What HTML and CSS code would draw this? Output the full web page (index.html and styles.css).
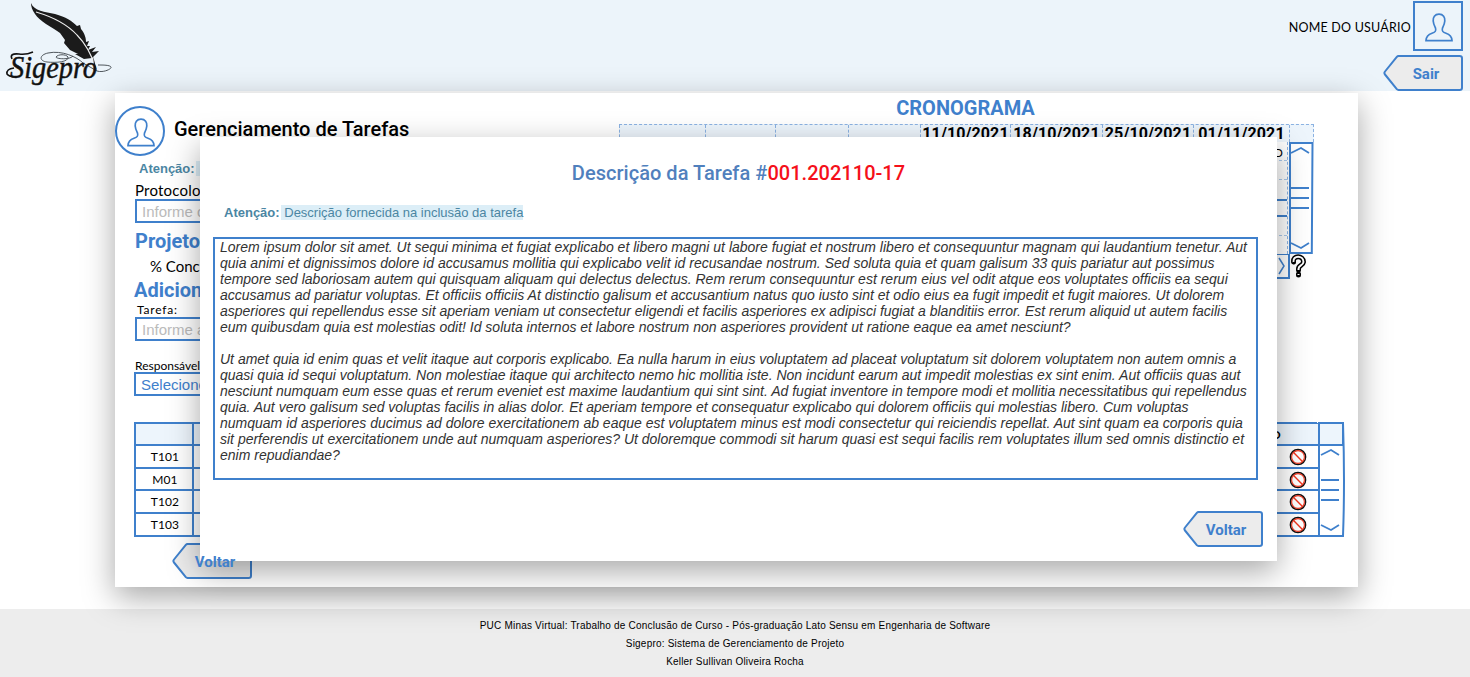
FILE: index.html
```
<!DOCTYPE html>
<html lang="pt-BR">
<head>
<meta charset="utf-8">
<title>Sigepro</title>
<link rel="stylesheet" href="styles.css">
</head>
<body>
<svg width="0" height="0" class="defs">
  <symbol id="person" viewBox="0 0 28 30"><path d="M14 1.200C9.700 1.200 7.900 4.500 8.200 8C8.400 11 9.500 13 10.500 15C11.300 18 10.500 19.200 7 20.300C3 21.500 1.200 23.500 1 27.600H27C26.800 23.500 25 21.500 21 20.300C17.500 19.200 16.700 18 17.500 15C18.500 13 19.600 11 19.800 8C20.100 4.500 18.300 1.200 14 1.200Z" fill="none" stroke="#3f80cc" stroke-width="1.700"/></symbol>
  <symbol id="tag" viewBox="0 0 80 36"><path d="M15.500 1H76.500Q79 1 79 3V33Q79 35 76.500 35H15.500Q14.500 35 13.800 34.200L2 19.500Q.8 18 2 16.500L13.800 1.800Q14.500 1 15.500 1Z" fill="#ececec" stroke="#3f80cc" stroke-width="2"/></symbol>
  <symbol id="no" viewBox="0 0 18 18"><circle cx="9" cy="9" r="7.600" fill="#fff" stroke="#111" stroke-width="1.500"/><circle cx="9" cy="9" r="6.400" fill="#fff" stroke="#f0341c" stroke-width="1.100"/><path d="M4.600 4.600L13.400 13.400" stroke="#f0341c" stroke-width="1.400"/></symbol>
</svg>

<header class="top">
  <svg class="logo" viewBox="0 0 115 91">
    <path d="M31 3C34 11 45 12 55 14C66 17 72 21 77 26L80 25L81 29C85 34 86 38 86 42L89 41L87 46L90 46L88 50L96 47L92 52L99 51L92 58L84 59L75 54L78 54L70 50L64 43L65 40L60 33C52 27 39 21 35 14C32 10 31 6 31 3Z" fill="#1b1b1b"/>
    <path d="M36 12C53 17 66 23 77 35C85 43 91 52 96 69" fill="none" stroke="#eee" stroke-width="1.100"/>
    <path d="M93 56L97 71L94 65Z" fill="#222"/>
    <path d="M73 56C70 60 56 59 56 57C58 54 66 54 68 57C69 62 56 63 47 62C39 61 39 55 48 53C62 50 77 57 83 63L97 71C103 73 112 69 111 67C110 65 103 65 98 65" fill="none" stroke="#3d444a" stroke-width=".9"/>
    <text x="10" y="78" textLength="87" lengthAdjust="spacingAndGlyphs" class="logo-text">Sigepro</text>
    <path d="M12 59Q9 53 19 54Q26 55 33 52M14 68Q6 69 7 74Q10 78 20 76" fill="none" stroke="#111" stroke-width="1.600"/>
  </svg>
  <div class="account">
    <div class="user"><span class="hand user-name">NOME DO USUÁRIO</span><div class="avatar"><svg width="28" height="30"><use href="#person"/></svg></div></div>
    <button class="tag"><svg width="80" height="36"><use href="#tag"/></svg><span>Sair</span></button>
  </div>
</header>

<main class="panel">
  <div class="upper">
    <section class="form">
      <div class="title"><div class="avatar round"><svg width="28" height="30"><use href="#person"/></svg></div><h1>Gerenciamento de Tarefas</h1></div>
      <p class="notice"><b>Atenção:</b><mark>&nbsp;&nbsp;&nbsp;</mark></p>
      <label class="hand protocol">Protocolo</label>
      <div class="field">Informe o</div>
      <h2 class="project">Projeto</h2>
      <div class="hand done">% Conc</div>
      <h2 class="add">Adicion</h2>
      <label class="hand task">Tarefa:</label>
      <div class="field">Informe a</div>
      <label class="hand owner">Responsável</label>
      <div class="field select">Selecione</div>
    </section>
    <section class="schedule">
      <h2>CRONOGRAMA</h2>
      <div class="chart">
        <div class="dates"><i></i><i></i><i></i><i></i><b>11/10/2021</b><b>18/10/2021</b><b>25/10/2021</b><b>01/11/2021</b><i></i></div>
        <div class="chart-body">
          <div class="rows"><div class="hand">D</div><div></div><div class="line"></div><div class="line second"></div><div></div></div>
          <svg class="scroll" width="26" height="112" viewBox="0 0 26 112"><path d="M2 1H24.500L23.800 111H2Z"/><path d="M3 11L13 6L21 11M3 46H21M3 56H21M3 66H21M3 101L13 106L21 101" class="thin"/></svg>
        </div>
        <div class="chart-foot"><div class="hscroll"><svg width="10" height="20" viewBox="0 0 10 20"><path d="M2 2L7 10L2 18"/></svg></div><svg class="help" width="18" height="24" viewBox="0 0 18 24"><path d="M3.500 8C2.500 1 13.500 1 13.500 8C13 12 8.500 11 8.500 15V16M8.500 20V21" stroke="#000" stroke-width="5" stroke-linecap="round"/><path d="M3.500 8C2.500 1 13.500 1 13.500 8C13 12 8.500 11 8.500 15V16M8.500 20V21" stroke="#fff" stroke-width="2"/></svg></div>
      </div>
    </section>
  </div>
  <div class="tasks">
    <div class="task-grid hand">
      <div class="head"></div><div class="head"></div><div class="head right">O</div>
      <div>T101</div><div></div><div class="right"><svg width="18" height="18"><use href="#no"/></svg></div>
      <div>M01</div><div></div><div class="right"><svg width="18" height="18"><use href="#no"/></svg></div>
      <div>T102</div><div></div><div class="right"><svg width="18" height="18"><use href="#no"/></svg></div>
      <div>T103</div><div></div><div class="right"><svg width="18" height="18"><use href="#no"/></svg></div>
    </div>
    <svg class="scroll" width="28" height="115" viewBox="0 0 28 115"><path d="M2 1H26V23H2Z" class="cap"/><path d="M2 1H26Q28 60 26 114H2Z"/><path d="M4 33L14 28L22 33M4 58H22M4 68H22M4 78H22M4 103L14 108L22 103" class="thin"/></svg>
  </div>
  <button class="tag back"><svg width="80" height="36"><use href="#tag"/></svg><span>Voltar</span></button>
</main>

<footer><p>PUC Minas Virtual: Trabalho de Conclusão de Curso - Pós-graduação Lato Sensu em Engenharia de Software</p><p>Sigepro: Sistema de Gerenciamento de Projeto</p><p>Keller Sullivan Oliveira Rocha</p></footer>

<div class="modal">
  <h1>Descrição da Tarefa #<span>001.202110-17</span></h1>
  <p class="notice"><b>Atenção:</b><mark>&nbsp;Descrição fornecida na inclusão da tarefa</mark></p>
  <div class="description">
    <p>Lorem ipsum dolor sit amet. Ut sequi minima et fugiat explicabo et libero magni ut labore fugiat et nostrum libero et consequuntur magnam qui laudantium tenetur. Aut<br>quia animi et dignissimos dolore id accusamus mollitia qui explicabo velit id recusandae nostrum. Sed soluta quia et quam galisum 33 quis pariatur aut possimus<br>tempore sed laboriosam autem qui quisquam aliquam qui delectus delectus. Rem rerum consequuntur est rerum eius vel odit atque eos voluptates officiis ea sequi<br>accusamus ad pariatur voluptas. Et officiis officiis At distinctio galisum et accusantium natus quo iusto sint et odio eius ea fugit impedit et fugit maiores. Ut dolorem<br>asperiores qui repellendus esse sit aperiam veniam ut consectetur eligendi et facilis asperiores ex adipisci fugiat a blanditiis error. Est rerum aliquid ut autem facilis<br>eum quibusdam quia est molestias odit! Id soluta internos et labore nostrum non asperiores provident ut ratione eaque ea amet nesciunt?</p>
    <p>Ut amet quia id enim quas et velit itaque aut corporis explicabo. Ea nulla harum in eius voluptatem ad placeat voluptatum sit dolorem voluptatem non autem omnis a<br>quasi quia id sequi voluptatum. Non molestiae itaque qui architecto nemo hic mollitia iste. Non incidunt earum aut impedit molestias ex sint enim. Aut officiis quas aut<br>nesciunt numquam eum esse quas et rerum eveniet est maxime laudantium qui sint sint. Ad fugiat inventore in tempore modi et mollitia necessitatibus qui repellendus<br>quia. Aut vero galisum sed voluptas facilis in alias dolor. Et aperiam tempore et consequatur explicabo qui dolorem officiis qui molestias libero. Cum voluptas<br>numquam id asperiores ducimus ad dolore exercitationem ab eaque est voluptatem minus est modi consectetur qui reiciendis repellat. Aut sint quam ea corporis quia<br>sit perferendis ut exercitationem unde aut numquam asperiores? Ut doloremque commodi sit harum quasi est sequi facilis rem voluptates illum sed omnis distinctio et<br>enim repudiandae?</p>
  </div>
  <button class="tag modal-back"><svg width="80" height="36"><use href="#tag"/></svg><span>Voltar</span></button>
</div>
</body>
</html>
```
FILE: styles.css
```
* { box-sizing: border-box; }
body { margin: 0; width: 1470px; height: 677px; overflow: hidden; background: #fff; font-family: "Liberation Sans", sans-serif; color: #000; position: relative; }
h1, h2, p { margin: 0; }
.defs { position: absolute; }
svg { display: block; }
.hand { font-family: Lato, sans-serif; white-space: nowrap; }

.top { height: 91px; background: #ecf4fa; display: flex; justify-content: space-between; padding-right: 7px; }
.logo { width: 115px; height: 91px; }
.logo-text { font: italic 400 32px "Liberation Serif", serif; fill: #111; stroke: #111; stroke-width: .5; }
.account { display: flex; flex-direction: column; align-items: flex-end; gap: 4px; padding-top: 1px; }
.user { display: flex; align-items: center; gap: 2px; }
.user-name { font-size: 12.500px; letter-spacing: .22px; padding-top: 3px; }
.avatar { width: 50px; height: 50px; border: 2px solid #3f80cc; display: flex; align-items: center; justify-content: center; }
.avatar svg { margin: 3px 0 0 2px; }
.avatar.round { border-radius: 50%; }
.tag { display: grid; width: 80px; height: 36px; padding: 0; border: 0; background: none; color: #3f80cc; font: 700 15px Roboto, sans-serif; place-items: center; }
.tag > * { grid-area: 1 / 1; }
.tag span { padding-left: 6px; padding-top: 1px; z-index: 1; }

.panel { position: relative; width: 1243px; height: 494px; margin: 2px 0 0 115px; background: #fff; box-shadow: 0 10px 30px rgba(0,0,0,.35); }
.upper { display: flex; height: 329px; }
.form { width: 504px; display: flex; flex-direction: column; padding: 13px 0 0; }
.title { display: flex; gap: 9px; height: 50px; }
.title h1 { font: 500 20px/46px Roboto, sans-serif; }
.notice { font-size: 13px; line-height: 15px; color: #4b86a3; white-space: nowrap; }
.notice mark { margin-left: 1px; background: #dceef7; color: inherit; }
.form .notice { margin: 5px 0 0 24px; }
.protocol { font-size: 15px; line-height: 18px; margin: 5px 0 0 20px; height: 18px; letter-spacing: .2px; }
.field { width: 300px; height: 24px; margin-left: 20px; border: 2px solid #3f80cc; padding-left: 5px; font-size: 15px; line-height: 21px; color: #bbb; }
.form h2, .schedule h2 { font: 700 20px/24px Roboto, sans-serif; color: #3f80cc; }
.project { margin: 6px 0 0 20px; }
.done { font-size: 15px; line-height: 19px; height: 20px; margin: 4px 0 0 35px; }
.form .add { margin: 1px 0 0 19px; }
.task { font-size: 12px; line-height: 14px; margin: 1px 0 0 22px; height: 14px; letter-spacing: .8px; }
.owner { font-size: 12px; line-height: 14px; margin: 18px 0 0 20px; height: 13px; }
.field.select { color: #3f80cc; margin-left: 19px; }

.schedule { width: 700px; padding-top: 3px; }
.schedule h2 { text-align: center; height: 28px; width: 693px; }
.chart { width: 695px; }
.dates { display: grid; grid-template-columns: 86px 70px 73px 72px 90px 92px 91px 96px 25px; height: 18px; background: #edf5fc; border-top: 1px dashed #8bb2e2; border-right: 1px dashed #8bb2e2; }
.dates > * { border-left: 1px dashed #8bb2e2; overflow: visible; text-align: center; white-space: nowrap; font: 700 16px/17px Roboto, sans-serif; letter-spacing: .1px; }
.chart-body { display: flex; height: 112px; }
.rows { width: 670px; border-right: 1px dashed #8bb2e2; }
.rows div { height: 19px; border-bottom: 1px dashed #aac9ec; text-align: right; padding-right: 4px; font-size: 12px; line-height: 21px; }
.rows .line { height: 21px; border-bottom: 2px solid #3f80cc; }
.rows .second { height: 16px; }
.scroll { flex: none; fill: none; stroke: #3f80cc; stroke-width: 2; }
.scroll .thin { stroke-width: 1.800; }
.scroll .cap { fill: #edf5fc; }
.chart-foot { display: flex; }
.hscroll { width: 671px; height: 25px; border: 2px solid #3f80cc; border-top-width: 1px; padding-right: 1px; display: flex; justify-content: flex-end; align-items: center; fill: none; stroke: #3f80cc; stroke-width: 1.500; }
.help { fill: none; }

.tasks { display: flex; margin-left: 19px; height: 115px; }
.task-grid { width: 1183px; height: 115px; display: grid; grid-template-columns: 58px 1039px 84px; grid-template-rows: 23px 23px 22px 23px 23px; border-left: 2px solid #3f80cc; border-top: 1px solid #3f80cc; font-size: 12px; letter-spacing: .1px; }
.task-grid > div { border-right: 2px solid #3f80cc; border-bottom: 2px solid #3f80cc; display: flex; justify-content: center; align-items: center; padding-left: 2px; }
.task-grid > .head { background: #edf5fc; border-top: 1px solid #3f80cc; font-weight: 700; }
.task-grid > .right { width: 86px; padding-left: 44px; padding-top: 1px; border-right: 0; }
.task-grid > .head.right { padding: 0; justify-content: flex-start; padding-left: 38px; }
.back { margin: 6px 0 0 57px; }

footer { margin-top: 22px; height: 68px; background: #ededed; padding-top: 8px; text-align: center; }
footer p { font-size: 10px; line-height: 18px; letter-spacing: .2px; }

.modal { position: absolute; left: 200px; top: 137px; width: 1077px; height: 424px; background: #fff; box-shadow: 0 10px 30px rgba(0,0,0,.35); display: flex; flex-direction: column; padding: 24px 14px 14px 13px; }
.modal h1 { font: 500 20px/24px Roboto, sans-serif; color: #5080bd; text-align: center; letter-spacing: .03px; padding-left: 1px; }
.modal h1 span { color: #f5101a; }
.modal .notice { margin: 20px 0 17px 11px; }
.description { width: 1045px; height: 243px; border: 2px solid #3f80cc; padding: 0 5px; font-style: italic; font-size: 14px; line-height: 16px; color: #333; white-space: nowrap; }
.description p + p { margin-top: 16px; }
.modal-back { margin-top: auto; align-self: flex-end; }
```
